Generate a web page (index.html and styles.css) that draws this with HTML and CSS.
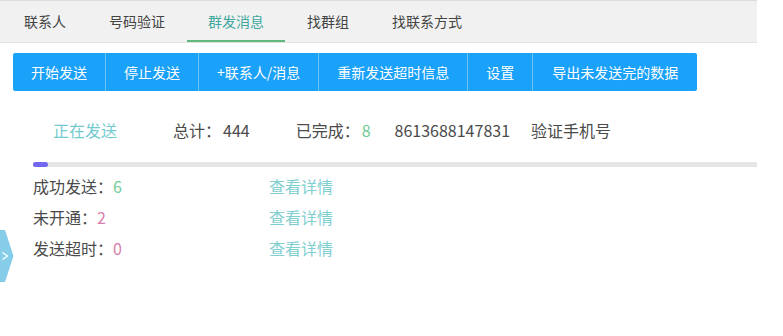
FILE: index.html
```html
<!DOCTYPE html>
<html lang="zh">
<head>
<meta charset="utf-8">
<link rel="stylesheet" href="styles.css">
</head>
<body>
<div class="app">
  <div class="tabs">
    <div class="tab">联系人</div>
    <div class="tab">号码验证</div>
    <div class="tab active">群发消息</div>
    <div class="tab">找群组</div>
    <div class="tab">找联系方式</div>
  </div>
  <div class="toolbar">
    <button class="btn">开始发送</button>
    <button class="btn">停止发送</button>
    <button class="btn">+联系人/消息</button>
    <button class="btn">重新发送超时信息</button>
    <button class="btn">设置</button>
    <button class="btn">导出未发送完的数据</button>
  </div>
  <div class="content">
    <div class="status">
      <span class="sending">正在发送</span>
      <span class="label total-label">总计：</span><span class="val">444</span>
      <span class="label done-label">已完成：</span><span class="val green">8</span>
      <span class="phone">8613688147831</span>
      <span class="verify">验证手机号</span>
    </div>
    <div class="progress"><div class="progress-fill" style="width:15px"></div></div>
    <div class="rows">
      <div class="row"><span class="row-label">成功发送：<span class="green">6</span></span><a class="link">查看详情</a></div>
      <div class="row"><span class="row-label">未开通：<span class="pink">2</span></span><a class="link">查看详情</a></div>
      <div class="row"><span class="row-label">发送超时：<span class="pink">0</span></span><a class="link">查看详情</a></div>
    </div>
  </div>
</div>
<div class="side-toggle">
  <svg width="14" height="52" viewBox="0 0 14 52"><polygon points="-2,0 5,0 13.5,26 5,52 -2,52" fill="#86cdea"/><path d="M2.5 22.5 L7.5 26 L2.5 29.5" fill="none" stroke="#fff" stroke-width="1.3"/></svg>
</div>
</body>
</html>
```
FILE: styles.css
```css
* { box-sizing: border-box; }
body {
  margin: 0;
  background: #fff;
  font-family: "Noto Sans CJK SC", "Noto Sans", sans-serif;
  color: #333;
}
.app { width: 757px; }
.tabs {
  display: flex;
  height: 43px;
  padding-left: 3px;
  background: #f1f1f1;
  border-top: 1px solid #dcdcdc;
  border-bottom: 1px solid #e2e2e2;
}
.tab {
  padding: 0 21px;
  margin-right: 1px;
  font-size: 14px;
  line-height: 40px;
  color: #444;
  border-bottom: 2px solid transparent;
}
.tab.active {
  color: #3fa89f;
  border-bottom-color: #5fb87c;
}
.toolbar {
  display: flex;
  margin: 10px 0 0 13px;
}
.btn {
  height: 38px;
  padding: 0 18px;
  border: 0;
  border-right: 1px solid #6cc3f8;
  background: #1aa1fa;
  color: #fff;
  font-family: inherit;
  font-size: 14px;
}
.btn:first-child { border-radius: 2px 0 0 2px; }
.btn:last-child { border-right: 0; border-radius: 0 2px 2px 0; padding: 0 19px; }
.content { padding-left: 33px; }
.status {
  display: flex;
  align-items: center;
  height: 36px;
  margin-top: 21px;
  padding-left: 20px;
  font-size: 16px;
  color: #4a4a4a;
}
.sending { color: #73cbcf; }
.total-label { margin-left: 56px; }
.done-label { margin-left: 46px; }
.val { margin-left: 2px; }
.phone { margin-left: 24px; }
.verify { margin-left: 21px; }
.green { color: #6fcb98; }
.pink { color: #d77fab; }
.progress {
  margin-top: 14px;
  height: 5px;
  background: #e5e5e5;
}
.progress-fill {
  height: 5px;
  border-radius: 3px;
  background: #7268f2;
}
.rows { margin-top: 3px; }
.row {
  display: flex;
  align-items: center;
  height: 31px;
  font-size: 16px;
  color: #4a4a4a;
}
.row-label { width: 236px; }
.link { color: #7fcfd0; }
.side-toggle {
  position: absolute;
  left: 0;
  top: 230px;
  width: 14px;
  height: 52px;
}
.side-toggle svg { display: block; }
```
